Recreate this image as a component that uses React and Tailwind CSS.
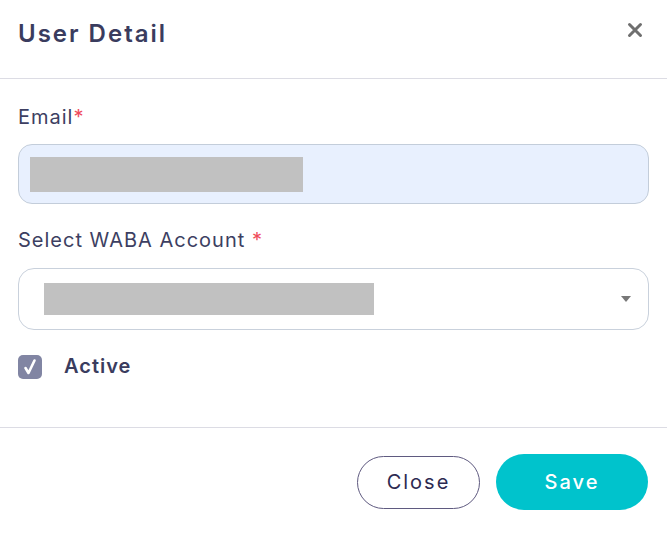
const FONT = "font-['Inter','Noto_Sans',sans-serif]";

function CloseIcon() {
  return (
    <svg width="16" height="16" viewBox="0 0 16 16" className="text-[#6f6f6f]">
      <path d="M2.5 2.5 L13.5 13.5 M13.5 2.5 L2.5 13.5" stroke="currentColor" strokeWidth="3" strokeLinecap="round" />
    </svg>
  );
}

function Label({ children, spaced }) {
  return (
    <div className="text-[20px] leading-[26px] tracking-[1px] text-[#3d3f62]">
      {children}
      <span className="text-[#ef4b5b]">{spaced ? ' *' : '*'}</span>
    </div>
  );
}

export default function App() {
  return (
    <div className={`w-[667px] h-[534px] bg-white ${FONT} overflow-hidden`}>
      {/* header */}
      <div className="h-[79px] px-[18px] flex items-center justify-between border-b border-[#dcdce4]">
        <h2 className="text-[24px] font-semibold tracking-[2px] text-[#3a3c5e] -mt-[10px]">User Detail</h2>
        <button className="mr-[6px] -mt-[19px]"><CloseIcon /></button>
      </div>

      {/* body */}
      <div className="px-[18px] pt-[25px] pb-[46px] border-b border-[#dcdce4]">
        <Label>Email</Label>
        <div className="mt-[14px] h-[60px] w-[631px] rounded-[14px] border border-[#c3cdda] bg-[#e8f0fe] pl-[11px] flex items-center">
          <div className="h-[35px] w-[273px] bg-[#c1c1c1]" />
        </div>

        <div className="mt-[23px]">
          <Label spaced>Select WABA Account</Label>
        </div>
        <div className="mt-[15px] h-[62px] w-[631px] rounded-[16px] border border-[#c9d1dc] bg-white pl-[25px] pr-[17px] flex items-center justify-between">
          <div className="h-[32px] w-[330px] bg-[#c1c1c1]" />
          <svg width="10" height="6" viewBox="0 0 10 6"><path d="M0 0 H10 L5 6 Z" fill="#787878" /></svg>
        </div>

        <div className="mt-[23px] h-[28px] flex items-center gap-[22px]">
          <div className="w-[24px] h-[24px] rounded-[5px] bg-[#8185a3] flex items-center justify-center">
            <svg width="16" height="18" viewBox="0 0 16 18">
              <path d="M3.5 10 L6.5 15 L12.5 2.5" fill="none" stroke="white" strokeWidth="2.6" strokeLinecap="round" strokeLinejoin="round" />
            </svg>
          </div>
          <span className="text-[20px] font-semibold tracking-[1px] text-[#3a3c5e] -mt-[3px]">Active</span>
        </div>
      </div>

      {/* footer */}
      <div className="pt-[26px] pr-[19px] flex justify-end items-center gap-[16px]">
        <button className="h-[53px] w-[123px] rounded-full border border-[#5f5a80] text-[20px] tracking-[2px] text-[#2d2a52]">Close</button>
        <button className="h-[56px] w-[152px] rounded-full bg-[#00c3cc] text-[20px] font-medium tracking-[2px] text-white">Save</button>
      </div>
    </div>
  );
}
